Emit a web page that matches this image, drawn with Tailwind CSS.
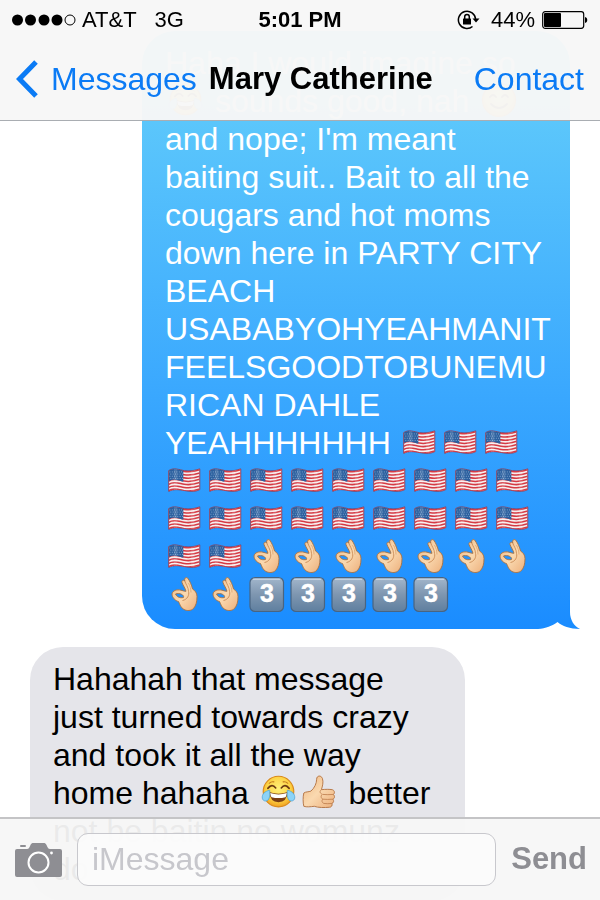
<!DOCTYPE html>
<html lang="en">
  <head>
    <meta charset="UTF-8" />
    <meta name="viewport" content="width=device-width, initial-scale=1.0" />
    <title>Mary Catherine - Messages</title>
    <script src="https://cdn.jsdelivr.net/npm/@tailwindcss/browser@4"></script>
  </head>
  <body class="h-screen overflow-hidden bg-white font-['Liberation_Sans',Arial,sans-serif] text-black">
    <!-- Emoji artwork -->
    <svg class="absolute h-0 w-0" aria-hidden="true">
      <defs>
        <linearGradient id="skin" x1="0" y1="0" x2="1" y2="1">
          <stop offset="0" stop-color="#eeb680" />
          <stop offset="0.5" stop-color="#fad9b0" />
          <stop offset="1" stop-color="#edb07c" />
        </linearGradient>
        <linearGradient id="key" x1="0" y1="0" x2="0" y2="1">
          <stop offset="0" stop-color="#a3b7cc" />
          <stop offset="0.5" stop-color="#7e96b0" />
          <stop offset="1" stop-color="#5f7f9f" />
        </linearGradient>
        <radialGradient id="face" cx="0.5" cy="0.4" r="0.6">
          <stop offset="0" stop-color="#fff07a" />
          <stop offset="0.65" stop-color="#fdd344" />
          <stop offset="1" stop-color="#f0a020" />
        </radialGradient>
        <clipPath id="flag-shape">
          <path d="M1 7C7 3 13 6 19 7S31 7 37 5V29C31 32 25 31 19 30S7 28 1 31Z" />
        </clipPath>
      </defs>
      <symbol id="flag" viewBox="-2 -3 45 44">
        <path d="M1 7C7 3 13 6 19 7S31 7 37 5V29C31 32 25 31 19 30S7 28 1 31Z" fill="#f6eeee" stroke="#8a3550" stroke-width="1" />
        <g clip-path="url(#flag-shape)">
          <g fill="none" stroke="#d53a44" stroke-width="1.8">
            <path d="M1 8C7 4 13 7 19 8S31 8 37 6" />
            <path d="M1 11.7C7 7.7 13 10.7 19 11.7S31 11.7 37 9.7" />
            <path d="M1 15.4C7 11.4 13 14.4 19 15.4S31 15.4 37 13.4" />
            <path d="M1 19.1C7 15.1 13 18.1 19 19.1S31 19.1 37 17.1" />
            <path d="M1 22.8C7 18.8 13 21.8 19 22.8S31 22.8 37 20.8" />
            <path d="M1 26.5C7 22.5 13 25.5 19 26.5S31 26.5 37 24.5" />
            <path d="M1 30.2C7 26.2 13 29.2 19 30.2S31 30.2 37 28.2" />
          </g>
          <path d="M1 6C7 2 13 5 18 6V20C13 18 7 16 1 19Z" fill="#2b5f9e" />
          <g stroke="#a9c8e6" stroke-width="0.9" stroke-dasharray="1 1.7">
            <path d="M2 8.500H18M3 11H18M2 13.500H18M3 16H18" />
          </g>
          <path d="M9 3V32M29 3V32" stroke="#fff" stroke-opacity="0.15" stroke-width="4" />
        </g>
      </symbol>
      <symbol id="ok" viewBox="0 0 41 38">
        <path fill-rule="evenodd" d="M17 6.500C16.500 4.500 18.500 3.500 19.800 5C18.800 2 21.500 .5 23 2.500C25 5.500 26.500 9 27.500 13C30 14.500 32 17 32 20.500C32 26 31 29.500 28.500 32.500C26 35 22 35 19 33.500C15.500 31.500 15 28.500 13.500 25.500C10.500 25 7 21.500 7 18C7.500 14.500 12 13.200 16 14.200C18 14.800 19.500 15.300 21 15.300C20.500 12.500 18 9.500 17 6.500ZM10.500 18C11.500 20.500 14.500 22.500 18.500 21.500C19.500 19 14.500 16.500 10.500 18Z" fill="url(#skin)" stroke="#a9713f" stroke-width="0.900" />
        <path d="M19.800 5C20.500 8 23.500 11 23.500 15.500C24.500 19 22.500 23.500 17.500 24.500" fill="none" stroke="#c98a55" stroke-width="0.900" />
        <path d="M23.500 7C25 10 26 13 26 16.500" fill="none" stroke="#dda36d" stroke-width="0.800" />
      </symbol>
      <symbol id="three" viewBox="0 0 41 38">
        <rect x="3" y="1.500" width="33.500" height="34" rx="5" fill="url(#key)" stroke="#4a6480" stroke-width="1.200" />
        <path d="M6 3.500H33" stroke="#d3deea" stroke-opacity="0.7" />
        <text x="20" y="26" text-anchor="middle" font-family="Liberation Sans" font-size="25" font-weight="bold" fill="#fff" stroke="#fff" stroke-width="0.500">3</text>
      </symbol>
      <symbol id="joy" viewBox="-1 -1 44 41">
        <circle cx="21" cy="18" r="16.500" fill="url(#face)" stroke="#d98a1c" stroke-width="1.200" />
        <path d="M9.500 14.500Q14 9 18 14M24 14Q28 9 32.500 14.500" fill="none" stroke="#6b3a12" stroke-width="1.800" stroke-linecap="round" />
        <path d="M11 9Q13 7 16 7.500M26 7.500Q29 7 31 9" fill="none" stroke="#c07a1e" stroke-width="1.200" stroke-linecap="round" />
        <path d="M11 18.500Q21 22 31 18.500Q30 29.500 21 29.500T11 18.500Z" fill="#7a3d12" />
        <path d="M12 19.500Q21 22.500 30 19.500Q29.500 23 28.500 24Q21 26 13.500 24Q12.500 23 12 19.500Z" fill="#fff" />
        <path d="M11.500 16.500C6 17.500 3 21 3.500 25C4 28.500 8.500 29.500 10.500 26C12 23 11.500 20 11.500 16.500Z" fill="#8bd3f8" stroke="#4ba3d8" stroke-width="0.800" />
        <path d="M30.500 16.500C36 17.500 39 21 38.500 25C38 28.500 33.500 29.500 31.500 26C30 23 30.500 20 30.500 16.500Z" fill="#8bd3f8" stroke="#4ba3d8" stroke-width="0.800" />
      </symbol>
      <symbol id="thumb" viewBox="0 -1 43 40">
        <path d="M5 19C7 17.500 10 18 12.500 17C16 14 18.500 9 18.500 4.500C18.500 .5 23 0 24.500 3.500C26 7.500 24.500 12 23.500 15.500C27.500 15 32 15 35 15.500C38 16.500 37.500 20 36 20.500C38 22 37.500 25 35.500 25.500C37 27 36.500 29.500 34.500 30C35.500 32 34 34 32 34C27 34.500 20 34.500 16 33C12 33.500 8 34 5 33C4 29 4 23 5 19Z" fill="url(#skin)" stroke="#b57646" stroke-width="1" />
        <path d="M36 20.500Q30 21 25 20.500M35.500 25.500Q30 26 25 25.500M34.500 30Q30 30.500 26 30M23.500 15.500C21.500 17 21.500 19 24.500 20.500C22.500 22 23 24.500 25 25.500C23.500 27 24 29 26 30" fill="none" stroke="#c08050" stroke-width="0.900" />
      </symbol>
      <symbol id="smile" viewBox="0 0 41 38">
        <circle cx="21" cy="18" r="16.500" fill="url(#face)" stroke="#d98a1c" stroke-width="1.200" />
        <path d="M12 15Q15 11 18 15M24 15Q27 11 30 15M13 22Q21 30 29 22" fill="none" stroke="#6b3a12" stroke-width="1.800" stroke-linecap="round" />
      </symbol>
    </svg>

    <header class="fixed inset-x-0 top-0 z-10 h-[121px] border-b border-[#a9adb2] bg-[#f7f7f7]/97">
      <!-- Status bar -->
      <div class="grid h-10 grid-cols-3 items-center px-3 text-[22px] leading-6">
        <div class="flex items-center whitespace-nowrap">
          <svg class="mr-[6px] shrink-0" width="64" height="12" viewBox="0 0 64 12" aria-label="Signal strength">
            <circle cx="5.500" cy="6" r="5.500" />
            <circle cx="18.500" cy="6" r="5.500" />
            <circle cx="32" cy="6" r="5.500" />
            <circle cx="45" cy="6" r="5.500" />
            <circle cx="58" cy="6" r="5" fill="none" stroke="#000" />
          </svg>
          <span>AT&amp;T</span>
          <span class="ml-[18px]">3G</span>
        </div>
        <div class="text-center font-bold">5:01 PM</div>
        <div class="flex items-center justify-end">
          <svg width="24" height="20" viewBox="0 0 24 20" fill="none" stroke="#000" stroke-width="1.500" aria-label="Rotation locked">
            <path d="M18.600 9.500A8.600 8.600 0 1 0 15.500 16.500" />
            <path d="M15.500 8.500H22.500L19 12.500Z" fill="#000" stroke="none" />
            <rect x="6" y="8.500" width="8" height="6" rx="0.500" fill="#000" stroke="none" />
            <path d="M7.700 9V6.800A2.300 2.300 0 0 1 12.300 6.800V9" />
          </svg>
          <span class="ml-[10px]">44%</span>
          <svg class="ml-[7px]" width="46" height="18" viewBox="0 0 46 18" aria-label="Battery">
            <rect x="0.700" y="0.700" width="41" height="16.600" rx="2.500" fill="none" stroke="#000" stroke-width="1.200" />
            <rect x="2" y="2" width="17" height="14" rx="1" />
            <path d="M43 6C46 6.500 46 11.500 43 12Z" />
          </svg>
        </div>
      </div>
      <!-- Navigation bar -->
      <nav class="flex h-[78px] items-center px-4 whitespace-nowrap">
        <a href="#" class="flex items-center text-[32px] text-[#0b7bf5]">
          <svg class="mr-[13px]" width="22" height="38" viewBox="0 0 22 38" fill="none" stroke="#0b7bf5" stroke-width="5" aria-hidden="true">
            <path d="M20 2L3.500 19L20 36" />
          </svg>
          Messages
        </a>
        <h1 class="ml-3 text-[31px] font-bold">Mary Catherine</h1>
        <a href="#" class="ml-auto text-[32px] text-[#0b7bf5]">Contact</a>
      </nav>
    </header>

    <main class="flex flex-col gap-[18px] pt-[31px] text-[32px] leading-[38px]">
      <div class="relative mr-[30px] w-[428px] self-end rounded-t-[33px] rounded-bl-[33px] bg-linear-to-b from-[#66d0fa] to-[#1a8cff] pt-[13px] pr-[18px] pb-[15px] pl-[23px] text-white">
        <p data-emoji>Haha I would imagine so 😂 sounds good, nah 😊<br />and nope; I'm meant baiting suit.. Bait to all the cougars and hot moms down here in PARTY CITY BEACH USABABYOHYEAHMANIT<wbr />FEELSGOODTOBUNEMU<wbr />RICAN DAHLE YEAHHHHHHH 🇺🇸🇺🇸🇺🇸🇺🇸🇺🇸🇺🇸🇺🇸🇺🇸🇺🇸🇺🇸🇺🇸🇺🇸🇺🇸🇺🇸🇺🇸🇺🇸🇺🇸🇺🇸🇺🇸🇺🇸🇺🇸🇺🇸🇺🇸👌👌👌👌👌👌👌👌👌3️⃣3️⃣3️⃣3️⃣3️⃣</p>
        <!-- Bubble tail -->
        <svg class="absolute -right-[10px] -bottom-px" width="42" height="30" viewBox="0 0 42 30" aria-hidden="true">
          <path d="M31 0V30H42V29C36 26 32 20 32 12V0Z" fill="#1a8dff" />
          <path d="M0 29C8 28.500 14 26 19.500 22C24 26 32 29 42 29V30H0Z" fill="#fff" />
        </svg>
      </div>

      <div class="ml-[30px] w-[435px] rounded-[33px] bg-[#e5e5ea] px-[23px] py-[13px]">
        <p data-emoji>Hahahah that message<br />just turned towards crazy and took it all the way home hahaha 😂👍 better not be baitin no womunz do</p>
      </div>
    </main>

    <form class="fixed inset-x-0 bottom-0 z-10 flex h-[83px] items-center gap-[15px] border-t-2 border-[#c4c4c6] bg-[#f7f7f7]/95 pr-[13px] pl-[15px]">
      <button type="button" aria-label="Camera" class="shrink-0">
        <svg width="47" height="36" viewBox="0 0 47 36" fill="#8e8e93" aria-hidden="true">
          <path d="M2 7H12C14 7 14.500 5 15.500 3C16.200 1.500 17 1 18.500 1H28.500C30 1 30.800 1.500 31.500 3C32.500 5 33 7 35 7H45Q47 7 47 9V33Q47 35 45 35H2Q0 35 0 33V9Q0 7 2 7Z" />
          <rect x="5" y="3" width="6" height="2" rx="1" />
          <circle cx="23.500" cy="20.500" r="10" fill="none" stroke="#fff" stroke-width="2" />
          <circle cx="36.500" cy="11" r="1.400" fill="#fff" />
        </svg>
      </button>
      <input type="text" aria-label="iMessage" placeholder="iMessage" class="h-[53px] min-w-0 flex-1 rounded-[11px] border border-[#c8c8cd] bg-[#fcfcfc]/90 px-[14px] text-[32px] placeholder:text-[#c7c7cc]" />
      <button type="submit" class="text-[31px] font-bold text-[#8e8e93]">Send</button>
    </form>

    <script>
      const emojiIcons = {
        "🇺🇸": "flag",
        "👌": "ok",
        "3️⃣": "three",
        "😂": "joy",
        "👍": "thumb",
        "😊": "smile",
      };
      const pattern = new RegExp(Object.keys(emojiIcons).join("|"), "g");

      // Swap each emoji character for its drawing
      document.querySelectorAll("[data-emoji]").forEach((el) => {
        el.innerHTML = el.innerHTML.replace(
          pattern,
          (char) =>
            `<svg class="inline-block h-[38px] w-[41px] align-top" role="img" aria-label="${char}"><use href="#${emojiIcons[char]}" /></svg>`
        );
      });
    </script>
  </body>
</html>
